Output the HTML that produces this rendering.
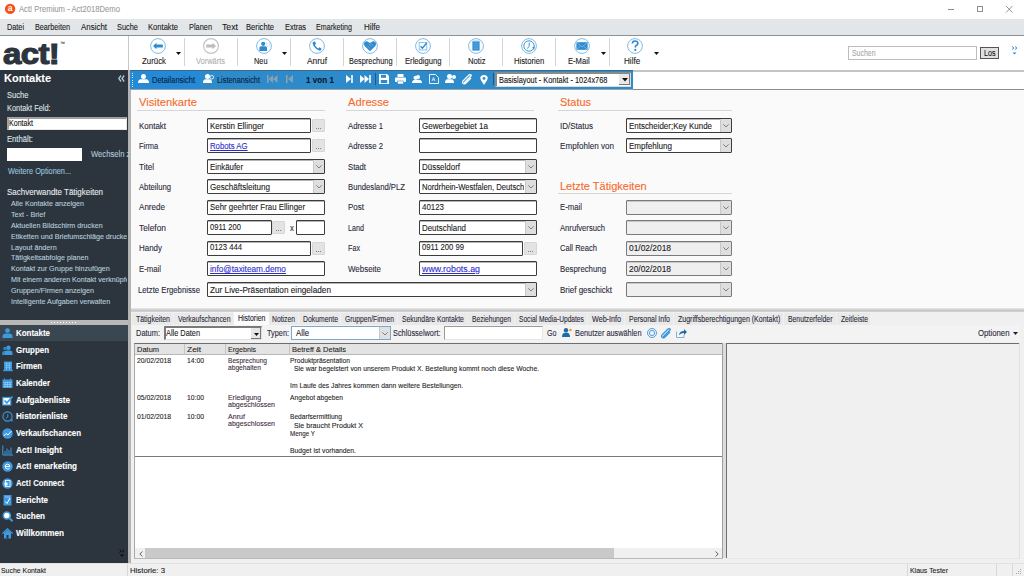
<!DOCTYPE html>
<html><head><meta charset="utf-8">
<style>
*{margin:0;padding:0;box-sizing:border-box}
html,body{width:1024px;height:576px;overflow:hidden;background:#fff;font-family:"Liberation Sans",sans-serif;color:#222}
.a{position:absolute}
.t{position:absolute;white-space:nowrap;line-height:1;-webkit-text-stroke:0.1px currentColor}
svg{position:absolute;overflow:visible}
.lk{color:#2b2bd0;text-decoration:underline}
</style></head><body>
<div class="a" style="left:0px;top:0px;width:1024px;height:19px;background:#fff"></div>
<svg style="left:4px;top:3px" width="12" height="12" viewBox="0 0 12 12"><circle cx="6.1" cy="5.9" r="5.2" fill="#f2541b"/><text x="6.1" y="8.4" font-family="Liberation Sans" font-weight="bold" font-size="8.5" fill="#fff" text-anchor="middle">a</text></svg>
<div class="t" style="left:19px;top:5px;font-size:8.5px;color:#9c9c9c;font-weight:normal;transform:scaleX(0.902);transform-origin:0 0;">Act! Premium - Act2018Demo</div>
<div class="a" style="left:948px;top:9px;width:6px;height:1px;background:#8a8a8a"></div>
<div class="a" style="left:976.5px;top:5.5px;width:6.5px;height:6.5px;border:1px solid #8e8e8e"></div>
<svg style="left:1006px;top:5.8px" width="7" height="7" viewBox="0 0 7 7"><path d="M0 0L6.5 6.5M6.5 0L0 6.5" stroke="#8a8a8a" stroke-width="0.9"/></svg>
<div class="a" style="left:0px;top:19px;width:1024px;height:17px;background:#e3e6e8;border-bottom:1px solid #8e9092"></div>
<div class="t" style="left:7px;top:23px;font-size:8.5px;color:#1a1a1a;font-weight:normal;transform:scaleX(0.857);transform-origin:0 0;">Datei</div>
<div class="t" style="left:35px;top:23px;font-size:8.5px;color:#1a1a1a;font-weight:normal;transform:scaleX(0.851);transform-origin:0 0;">Bearbeiten</div>
<div class="t" style="left:81px;top:23px;font-size:8.5px;color:#1a1a1a;font-weight:normal;transform:scaleX(0.933);transform-origin:0 0;">Ansicht</div>
<div class="t" style="left:117px;top:23px;font-size:8.5px;color:#1a1a1a;font-weight:normal;transform:scaleX(0.871);transform-origin:0 0;">Suche</div>
<div class="t" style="left:148px;top:23px;font-size:8.5px;color:#1a1a1a;font-weight:normal;transform:scaleX(0.894);transform-origin:0 0;">Kontakte</div>
<div class="t" style="left:189px;top:23px;font-size:8.5px;color:#1a1a1a;font-weight:normal;transform:scaleX(0.869);transform-origin:0 0;">Planen</div>
<div class="t" style="left:222px;top:23px;font-size:8.5px;color:#1a1a1a;font-weight:normal;transform:scaleX(1.026);transform-origin:0 0;">Text</div>
<div class="t" style="left:246px;top:23px;font-size:8.5px;color:#1a1a1a;font-weight:normal;transform:scaleX(0.898);transform-origin:0 0;">Berichte</div>
<div class="t" style="left:285px;top:23px;font-size:8.5px;color:#1a1a1a;font-weight:normal;transform:scaleX(0.872);transform-origin:0 0;">Extras</div>
<div class="t" style="left:316px;top:23px;font-size:8.5px;color:#1a1a1a;font-weight:normal;transform:scaleX(0.837);transform-origin:0 0;">Emarketing</div>
<div class="t" style="left:364px;top:23px;font-size:8.5px;color:#1a1a1a;font-weight:normal;transform:scaleX(0.941);transform-origin:0 0;">Hilfe</div>
<div class="a" style="left:0px;top:36px;width:1024px;height:34px;background:#fff"></div>
<div class="t" style="left:3px;top:39px;font-size:30px;font-weight:bold;color:#2c353e;-webkit-text-stroke:1.2px #2c353e;transform:scaleX(1.1);transform-origin:0 0;letter-spacing:-0.6px">act!</div>
<div class="t" style="left:60px;top:41px;font-size:5px;color:#2c353e;font-weight:normal;">™</div>
<div class="a" style="left:128px;top:36px;width:1px;height:34px;background:#c8c8c8"></div>
<div class="a" style="left:184px;top:38px;width:1px;height:28px;background:#d4d4d4"></div>
<div class="a" style="left:237px;top:38px;width:1px;height:28px;background:#d4d4d4"></div>
<div class="a" style="left:290px;top:38px;width:1px;height:28px;background:#d4d4d4"></div>
<div class="a" style="left:343px;top:38px;width:1px;height:28px;background:#d4d4d4"></div>
<div class="a" style="left:396px;top:38px;width:1px;height:28px;background:#d4d4d4"></div>
<div class="a" style="left:449px;top:38px;width:1px;height:28px;background:#d4d4d4"></div>
<div class="a" style="left:502px;top:38px;width:1px;height:28px;background:#d4d4d4"></div>
<div class="a" style="left:555px;top:38px;width:1px;height:28px;background:#d4d4d4"></div>
<div class="a" style="left:609px;top:38px;width:1px;height:28px;background:#d4d4d4"></div>
<svg style="left:157.5px;top:46px" width="1" height="1"><circle cx="0" cy="0" r="7.4" fill="none" stroke="#7fbce8" stroke-width="1"/><path d="M-5 0L-1.5-3.2V-1.5H4.8V1.5H-1.5V3.2Z" fill="#2e8bd0"/></svg>
<div class="t" style="left:142px;top:57px;font-size:8.5px;color:#1a1a1a;font-weight:normal;transform:scaleX(0.924);transform-origin:0 0;">Zurück</div>
<svg style="left:176px;top:51.5px" width="5" height="3" viewBox="0 0 5 3"><path d="M0 0H5L2.5 3Z" fill="#111"/></svg>
<svg style="left:210.5px;top:46px" width="1" height="1"><circle cx="0" cy="0" r="7.4" fill="none" stroke="#c4c4c4" stroke-width="1.2"/><path d="M5 0L1.5-3.2V-1.5H-4.8V1.5H1.5V3.2Z" fill="#bdbdbd"/></svg>
<div class="t" style="left:196px;top:57px;font-size:8.5px;color:#b0b0b0;font-weight:normal;transform:scaleX(0.877);transform-origin:0 0;">Vorwärts</div>
<svg style="left:263.75px;top:46px" width="1" height="1"><circle cx="0" cy="0" r="7.4" fill="none" stroke="#7fbce8" stroke-width="1"/><circle cx="-0.8" cy="-2.2" r="2.1" fill="#2e8bd0"/><path d="M-4.6 5V1.8Q-4.6 0.2-3 0.2H1.4Q3 0.2 3 1.8V5Z" fill="#2e8bd0"/><rect x="2.8" y="-3" width="2.6" height="3.2" fill="none" stroke="#c4e0f4" stroke-width="0.7"/></svg>
<div class="t" style="left:253.5px;top:57px;font-size:8.5px;color:#1a1a1a;font-weight:normal;transform:scaleX(0.866);transform-origin:0 0;">Neu</div>
<svg style="left:282px;top:51.5px" width="5" height="3" viewBox="0 0 5 3"><path d="M0 0H5L2.5 3Z" fill="#111"/></svg>
<svg style="left:316.75px;top:46px" width="1" height="1"><circle cx="0" cy="0" r="7.4" fill="none" stroke="#7fbce8" stroke-width="1"/><path d="M-3.6-4.2L-2-4.4L-1-2.2L-2.1-1.1Q-0.6 1.6 1.3 2.5L2.4 1.3L4.4 2.4L4.2 4Q3.5 4.8 2.2 4.4Q-3.2 2-4.4-2.6Q-4.6-3.6-3.6-4.2Z" fill="#2e8bd0"/></svg>
<div class="t" style="left:307px;top:57px;font-size:8.5px;color:#1a1a1a;font-weight:normal;transform:scaleX(0.984);transform-origin:0 0;">Anruf</div>
<svg style="left:370px;top:46px" width="1" height="1"><circle cx="0" cy="0" r="7.4" fill="none" stroke="#7fbce8" stroke-width="1"/><path d="M0 5.2L-5.4 0Q-6.9-2.2-5.4-3.9Q-3.6-5.4-1.6-4.1L0-3L1.6-4.1Q3.6-5.4 5.4-3.9Q6.9-2.2 5.4 0Z" fill="#2e8bd0"/><path d="M-1.4-2.2L1.6 0.6M-2.6 0L0.4 2.6M0.6-2.8L3.4-0.4" stroke="#9ccbee" stroke-width="0.5"/></svg>
<div class="t" style="left:349px;top:57px;font-size:8.5px;color:#1a1a1a;font-weight:normal;transform:scaleX(0.868);transform-origin:0 0;">Besprechung</div>
<svg style="left:422.8px;top:46px" width="1" height="1"><circle cx="0" cy="0" r="7.4" fill="none" stroke="#7fbce8" stroke-width="1"/><rect x="-3.8" y="-3.6" width="7.6" height="7.6" fill="none" stroke="#7fbce8" stroke-width="0.9"/><path d="M-2.4 0.2L-0.6 2.2L3.6-3" fill="none" stroke="#2e8bd0" stroke-width="1.4"/></svg>
<div class="t" style="left:405px;top:57px;font-size:8.5px;color:#1a1a1a;font-weight:normal;transform:scaleX(0.898);transform-origin:0 0;">Erledigung</div>
<svg style="left:476px;top:46px" width="1" height="1"><circle cx="0" cy="0" r="7.4" fill="none" stroke="#7fbce8" stroke-width="1"/><rect x="-3.6" y="-4.6" width="7.2" height="9.2" fill="#2e8bd0"/><path d="M-2.6-2.6H2.6M-2.6-0.8H2.6M-2.6 1H2.6M-2.6 2.8H2.6" stroke="#8cc3ea" stroke-width="0.5"/><rect x="-3.6" y="-5.4" width="7.2" height="1.2" fill="#7fbce8"/></svg>
<div class="t" style="left:467.5px;top:57px;font-size:8.5px;color:#1a1a1a;font-weight:normal;transform:scaleX(0.904);transform-origin:0 0;">Notiz</div>
<svg style="left:529px;top:46px" width="1" height="1"><circle cx="0" cy="0" r="7.4" fill="none" stroke="#7fbce8" stroke-width="1"/><circle cx="0" cy="0" r="5.2" fill="none" stroke="#2e8bd0" stroke-width="0.9"/><path d="M0.2-3.5V0.6L-2 2.6" fill="none" stroke="#2e8bd0" stroke-width="0.9"/><path d="M3.2 1.4L5.6 0.6L5.2 4Z" fill="#2e8bd0"/></svg>
<div class="t" style="left:513.75px;top:57px;font-size:8.5px;color:#1a1a1a;font-weight:normal;transform:scaleX(0.902);transform-origin:0 0;">Historien</div>
<svg style="left:582px;top:46px" width="1" height="1"><circle cx="0" cy="0" r="7.4" fill="none" stroke="#7fbce8" stroke-width="1"/><rect x="-5.6" y="-3.8" width="11.2" height="7.6" fill="#2e8bd0"/><path d="M-5.6-3.8L0 1L5.6-3.8M-5.6 3.8L-1.5 0M5.6 3.8L1.5 0" fill="none" stroke="#9fd0f2" stroke-width="0.6"/></svg>
<div class="t" style="left:568.4px;top:57px;font-size:8.5px;color:#1a1a1a;font-weight:normal;transform:scaleX(0.897);transform-origin:0 0;">E-Mail</div>
<svg style="left:601px;top:51.5px" width="5" height="3" viewBox="0 0 5 3"><path d="M0 0H5L2.5 3Z" fill="#111"/></svg>
<svg style="left:635px;top:46px" width="1" height="1"><circle cx="0" cy="0" r="7.4" fill="none" stroke="#7fbce8" stroke-width="1"/><path d="M-2.6-2.4Q-2.6-5 0-5Q2.8-5 2.8-2.6Q2.8-1.2 1.2-0.4Q0.3 0.1 0.3 1.4" fill="none" stroke="#2e8bd0" stroke-width="1.7"/><circle cx="0.3" cy="3.9" r="1.1" fill="#2e8bd0"/></svg>
<div class="t" style="left:623.75px;top:57px;font-size:8.5px;color:#1a1a1a;font-weight:normal;transform:scaleX(0.956);transform-origin:0 0;">Hilfe</div>
<svg style="left:654px;top:51.5px" width="5" height="3" viewBox="0 0 5 3"><path d="M0 0H5L2.5 3Z" fill="#111"/></svg>
<div class="a" style="left:848px;top:46px;width:129px;height:14px;background:#fff;border:1px solid #bdbdbd"></div>
<div class="t" style="left:852px;top:49px;font-size:8.5px;color:#a8a8a8;font-weight:normal;transform:scaleX(0.815);transform-origin:0 0;">Suchen</div>
<div class="a" style="left:980px;top:47px;width:19px;height:12px;background:#e1e1e1;border:1px solid #555"></div>
<div class="t" style="left:983.5px;top:49px;font-size:8.5px;color:#111;font-weight:normal;transform:scaleX(0.839);transform-origin:0 0;">Los</div>
<svg style="left:1011px;top:46px" width="8" height="10" viewBox="0 0 8 10"><path d="M1 0.5L3 2L1 3.5M4 0.5L6 2L4 3.5" fill="none" stroke="#2e8bd0" stroke-width="0.9"/><path d="M1.5 6.5H5.5L3.5 8.5Z" fill="#2e8bd0"/></svg>
<div class="a" style="left:0px;top:70px;width:128px;height:493px;background:#2c353e"></div>
<div class="a" style="left:128px;top:70px;width:3px;height:493px;background:#b4b4b4"></div>
<div class="t" style="left:4px;top:73px;font-size:11px;color:#ffffff;font-weight:bold;">Kontakte</div>
<svg style="left:118px;top:75px" width="7" height="7" viewBox="0 0 7 7"><path d="M3 0.5L0.8 3.5L3 6.5M6.2 0.5L4 3.5L6.2 6.5" fill="none" stroke="#a9c8dc" stroke-width="1.3"/></svg>
<div class="t" style="left:7px;top:91px;font-size:8.5px;color:#dfe3e6;font-weight:normal;transform:scaleX(0.892);transform-origin:0 0;">Suche</div>
<div class="t" style="left:7px;top:104px;font-size:8.5px;color:#dfe3e6;font-weight:normal;transform:scaleX(0.871);transform-origin:0 0;">Kontakt Feld:</div>
<div class="a" style="left:7px;top:117px;width:120px;height:13px;background:#fff;border-top:2px solid #a0a0a0;border-left:2px solid #a0a0a0;border-right:1px solid #e8e8e8;border-bottom:1px solid #e8e8e8"></div>
<div class="t" style="left:9px;top:119px;font-size:8.5px;color:#111;font-weight:normal;transform:scaleX(0.833);transform-origin:0 0;">Kontakt</div>
<div class="t" style="left:7px;top:135px;font-size:8.5px;color:#dfe3e6;font-weight:normal;transform:scaleX(0.900);transform-origin:0 0;">Enthält:</div>
<div class="a" style="left:7px;top:148px;width:75px;height:13px;background:#fff"></div>
<div class="t" style="left:91px;top:150px;font-size:8.5px;color:#b4cad8;font-weight:normal;transform:scaleX(0.900);transform-origin:0 0;">Wechseln z</div>
<div class="t" style="left:7.5px;top:167px;font-size:8.5px;color:#9cc2de;font-weight:normal;transform:scaleX(0.862);transform-origin:0 0;">Weitere Optionen...</div>
<div class="t" style="left:7px;top:188px;font-size:9px;color:#e8ebed;font-weight:normal;transform:scaleX(0.886);transform-origin:0 0;">Sachverwandte Tätigkeiten</div>
<div class="a" style="left:0;top:190px;width:127px;height:125px;overflow:hidden">
<div class="t" style="left:11px;top:10px;font-size:7.6px;color:#b9cfdd;transform:scaleX(0.94);transform-origin:0 0">Alle Kontakte anzeigen</div>
<div class="t" style="left:11px;top:21px;font-size:7.6px;color:#b9cfdd;transform:scaleX(0.94);transform-origin:0 0">Text - Brief</div>
<div class="t" style="left:11px;top:32px;font-size:7.6px;color:#b9cfdd;transform:scaleX(0.94);transform-origin:0 0">Aktuellen Bildschirm drucken</div>
<div class="t" style="left:11px;top:43px;font-size:7.6px;color:#b9cfdd;transform:scaleX(0.94);transform-origin:0 0">Etiketten und Briefumschläge drucken</div>
<div class="t" style="left:11px;top:54px;font-size:7.6px;color:#b9cfdd;transform:scaleX(0.94);transform-origin:0 0">Layout ändern</div>
<div class="t" style="left:11px;top:64px;font-size:7.6px;color:#b9cfdd;transform:scaleX(0.94);transform-origin:0 0">Tätigkeitsabfolge planen</div>
<div class="t" style="left:11px;top:75px;font-size:7.6px;color:#b9cfdd;transform:scaleX(0.94);transform-origin:0 0">Kontakt zur Gruppe hinzufügen</div>
<div class="t" style="left:11px;top:86px;font-size:7.6px;color:#b9cfdd;transform:scaleX(0.94);transform-origin:0 0">Mit einem anderen Kontakt verknüpfen</div>
<div class="t" style="left:11px;top:97px;font-size:7.6px;color:#b9cfdd;transform:scaleX(0.94);transform-origin:0 0">Gruppen/Firmen anzeigen</div>
<div class="t" style="left:11px;top:108px;font-size:7.6px;color:#b9cfdd;transform:scaleX(0.94);transform-origin:0 0">Intelligente Aufgaben verwalten</div>
</div>
<div class="a" style="left:0px;top:320px;width:128px;height:5px;background:#b8b8b8"></div>
<div class="a" style="left:51px;top:322px;width:1px;height:1px;background:#fff"></div>
<div class="a" style="left:54px;top:322px;width:1px;height:1px;background:#fff"></div>
<div class="a" style="left:57px;top:322px;width:1px;height:1px;background:#fff"></div>
<div class="a" style="left:60px;top:322px;width:1px;height:1px;background:#fff"></div>
<div class="a" style="left:63px;top:322px;width:1px;height:1px;background:#fff"></div>
<div class="a" style="left:66px;top:322px;width:1px;height:1px;background:#fff"></div>
<div class="a" style="left:69px;top:322px;width:1px;height:1px;background:#fff"></div>
<div class="a" style="left:72px;top:322px;width:1px;height:1px;background:#fff"></div>
<div class="a" style="left:75px;top:322px;width:1px;height:1px;background:#fff"></div>
<div class="a" style="left:0px;top:325px;width:128px;height:16px;background:#3a4650"></div>
<div class="t" style="left:16px;top:329px;font-size:8.5px;color:#ffffff;font-weight:bold;transform:scaleX(0.935);transform-origin:0 0;">Kontakte</div>
<svg style="left:2px;top:328px" width="11" height="11" viewBox="0 0 11 11"><circle cx="5.5" cy="2.6" r="2.4" fill="#3d9ae0"/><path d="M0.5 10V8.6Q0.5 5.6 3.5 5.4H7.5Q10.5 5.6 10.5 8.6V10Z" fill="#3d9ae0"/></svg>
<div class="t" style="left:16px;top:346px;font-size:8.5px;color:#ffffff;font-weight:bold;transform:scaleX(0.932);transform-origin:0 0;">Gruppen</div>
<svg style="left:2px;top:345px" width="11" height="11" viewBox="0 0 11 11"><circle cx="3" cy="3.5" r="1.8" fill="#2a86b8"/><path d="M0 10V8Q0 6 2 6H4V10Z" fill="#2a86b8"/><circle cx="6.5" cy="2.8" r="2.2" fill="#3d9ae0"/><path d="M2.5 10V8.6Q2.5 5.8 5 5.6H8Q10.5 5.8 10.5 8.6V10Z" fill="#3d9ae0"/></svg>
<div class="t" style="left:16px;top:362px;font-size:8.5px;color:#ffffff;font-weight:bold;transform:scaleX(0.917);transform-origin:0 0;">Firmen</div>
<svg style="left:2px;top:361px" width="11" height="11" viewBox="0 0 11 11"><rect x="2" y="0.5" width="8" height="9.5" fill="#3d9ae0"/><path d="M3.5 2.5H8.5M3.5 4.5H8.5M3.5 6.5H8.5M4.5 1.5V8.5M7.5 1.5V8.5" stroke="#8cc6ee" stroke-width="0.6"/><rect x="1" y="9.2" width="10" height="1" fill="#3d9ae0"/></svg>
<div class="t" style="left:16px;top:379px;font-size:8.5px;color:#ffffff;font-weight:bold;transform:scaleX(0.935);transform-origin:0 0;">Kalender</div>
<svg style="left:2px;top:378px" width="11" height="11" viewBox="0 0 11 11"><rect x="0.5" y="1.5" width="10" height="8.5" fill="#3d9ae0"/><path d="M1.5 4.5H9.5M1.5 6.5H9.5M1.5 8.5H9.5M3 3.8V9.5M5.5 3.8V9.5M8 3.8V9.5" stroke="#a8d4f2" stroke-width="0.6"/><path d="M2.5 0.5V2.5M8.5 0.5V2.5" stroke="#3d9ae0" stroke-width="1"/></svg>
<div class="t" style="left:16px;top:396px;font-size:8.5px;color:#ffffff;font-weight:bold;transform:scaleX(0.961);transform-origin:0 0;">Aufgabenliste</div>
<svg style="left:2px;top:395px" width="11" height="11" viewBox="0 0 11 11"><rect x="0.8" y="2.5" width="8" height="7.5" fill="#fff" stroke="#3d9ae0" stroke-width="1.2"/><path d="M2.5 5.5L4.8 8L10.5 1.5" fill="none" stroke="#3d9ae0" stroke-width="1.8"/></svg>
<div class="t" style="left:16px;top:412px;font-size:8.5px;color:#ffffff;font-weight:bold;transform:scaleX(0.956);transform-origin:0 0;">Historienliste</div>
<svg style="left:2px;top:411px" width="11" height="11" viewBox="0 0 11 11"><circle cx="5.5" cy="5.5" r="4.6" fill="none" stroke="#3d9ae0" stroke-width="1.1"/><path d="M5.8 3V6L3.8 7.5" fill="none" stroke="#3d9ae0" stroke-width="0.9"/><path d="M8.5 8.5L11 8.5L10 11Z" fill="#3d9ae0"/></svg>
<div class="t" style="left:16px;top:429px;font-size:8.5px;color:#ffffff;font-weight:bold;transform:scaleX(0.930);transform-origin:0 0;">Verkaufschancen</div>
<svg style="left:2px;top:428px" width="11" height="11" viewBox="0 0 11 11"><circle cx="5.5" cy="5.5" r="5.2" fill="#3d9ae0"/><path d="M1.8 8L4 5.5L6 7L9.5 3" fill="none" stroke="#fff" stroke-width="1"/></svg>
<div class="t" style="left:16px;top:446px;font-size:8.5px;color:#ffffff;font-weight:bold;transform:scaleX(0.984);transform-origin:0 0;">Act! Insight</div>
<svg style="left:2px;top:445px" width="11" height="11" viewBox="0 0 11 11"><path d="M0.8 0.5V10H11" fill="none" stroke="#3d9ae0" stroke-width="1"/><path d="M3 9.5V6M5 9.5V3.5M7 9.5V5M9 9.5V2.5" stroke="#3d9ae0" stroke-width="1"/></svg>
<div class="t" style="left:16px;top:462px;font-size:8.5px;color:#ffffff;font-weight:bold;transform:scaleX(0.950);transform-origin:0 0;">Act! emarketing</div>
<svg style="left:2px;top:461px" width="11" height="11" viewBox="0 0 11 11"><circle cx="5.5" cy="5.5" r="5.2" fill="#3d9ae0"/><path d="M3.2 5.6H7.8Q7.8 3.2 5.5 3.2Q3.2 3.2 3.2 5.6Q3.2 8 5.6 8Q7 8 7.6 7.2" fill="none" stroke="#fff" stroke-width="1"/></svg>
<div class="t" style="left:16px;top:479px;font-size:8.5px;color:#ffffff;font-weight:bold;transform:scaleX(0.908);transform-origin:0 0;">Act! Connect</div>
<svg style="left:2px;top:478px" width="11" height="11" viewBox="0 0 11 11"><circle cx="5.5" cy="5.5" r="5.2" fill="#3d9ae0"/><rect x="3.5" y="2.5" width="4.5" height="6" fill="none" stroke="#fff" stroke-width="0.8"/><path d="M2.5 4.5H5.5V7.5H2.5Z" fill="#fff"/></svg>
<div class="t" style="left:16px;top:496px;font-size:8.5px;color:#ffffff;font-weight:bold;transform:scaleX(0.941);transform-origin:0 0;">Berichte</div>
<svg style="left:2px;top:495px" width="11" height="11" viewBox="0 0 11 11"><rect x="1.5" y="0" width="8" height="10.5" fill="#3d9ae0"/><path d="M3 6.5L5 8.5L8 3" fill="none" stroke="#fff" stroke-width="1"/><path d="M3 2H8" stroke="#bfe0f6" stroke-width="0.7"/></svg>
<div class="t" style="left:16px;top:512px;font-size:8.5px;color:#ffffff;font-weight:bold;transform:scaleX(0.945);transform-origin:0 0;">Suchen</div>
<svg style="left:2px;top:511px" width="11" height="11" viewBox="0 0 11 11"><circle cx="4.8" cy="4.5" r="3.5" fill="#fff" stroke="#3d9ae0" stroke-width="1.6"/><path d="M7.3 7L10.5 10.3" stroke="#3d9ae0" stroke-width="2"/></svg>
<div class="t" style="left:16px;top:529px;font-size:8.5px;color:#ffffff;font-weight:bold;transform:scaleX(0.960);transform-origin:0 0;">Willkommen</div>
<svg style="left:2px;top:528px" width="11" height="11" viewBox="0 0 11 11"><path d="M0.5 5.5L5.5 0.8L10.5 5.5" fill="none" stroke="#3d9ae0" stroke-width="1.3"/><path d="M2 5V10.5H9V5L5.5 2Z" fill="#3d9ae0"/><rect x="4.5" y="7" width="2" height="3.5" fill="#2c353e"/></svg>
<svg style="left:119px;top:549px" width="6" height="8" viewBox="0 0 6 8"><path d="M0.5 0.5L2.2 2L0.5 3.5M3 0.5L4.7 2L3 3.5" fill="none" stroke="#0a0a0a" stroke-width="0.9"/><path d="M0.8 5.5H5.2L3 7.8Z" fill="#0a0a0a"/></svg>
<div class="a" style="left:130px;top:70px;width:503px;height:20px;background:#2d8bcb;border-top:1px solid #3a6a90;border-bottom:1px solid #9aa4ac"></div>
<div class="a" style="left:131px;top:71px;width:69px;height:18px;background:#2489d6"></div>
<div class="a" style="left:132px;top:73.0px;width:1px;height:1px;background:#e8f2fa"></div>
<div class="a" style="left:132px;top:75.2px;width:1px;height:1px;background:#e8f2fa"></div>
<div class="a" style="left:132px;top:77.4px;width:1px;height:1px;background:#e8f2fa"></div>
<div class="a" style="left:132px;top:79.6px;width:1px;height:1px;background:#e8f2fa"></div>
<div class="a" style="left:132px;top:81.8px;width:1px;height:1px;background:#e8f2fa"></div>
<div class="a" style="left:132px;top:84.0px;width:1px;height:1px;background:#e8f2fa"></div>
<div class="a" style="left:132px;top:86.2px;width:1px;height:1px;background:#e8f2fa"></div>
<svg style="left:138px;top:74px" width="11" height="9" viewBox="0 0 11 9"><circle cx="5.5" cy="2.6" r="2.5" fill="#fff"/><path d="M0 9Q0 5.6 3 5.3H8Q11 5.6 11 9Z" fill="#fff"/></svg>
<div class="t" style="left:152px;top:76px;font-size:8.5px;color:#0d2236;font-weight:normal;transform:scaleX(0.884);transform-origin:0 0;">Detailansicht</div>
<svg style="left:203px;top:74px" width="11" height="9" viewBox="0 0 11 9"><circle cx="4.5" cy="2.6" r="2.5" fill="#fff"/><path d="M0 9Q0 5.6 2.5 5.3H6.5Q9 5.6 9 9Z" fill="#fff"/><circle cx="8.8" cy="3.2" r="1.8" fill="none" stroke="#fff" stroke-width="0.8"/></svg>
<div class="t" style="left:217px;top:76px;font-size:8.5px;color:#0d2236;font-weight:normal;transform:scaleX(0.867);transform-origin:0 0;">Listenansicht</div>
<svg style="left:267px;top:75px" width="11" height="8" viewBox="0 0 11 8"><rect x="0" y="0" width="1.6" height="8" fill="#8aa0b0"/><path d="M6 0L1.6 4L6 8ZM10.5 0L6 4L10.5 8Z" fill="#8aa0b0"/></svg>
<svg style="left:286px;top:75px" width="7" height="8" viewBox="0 0 7 8"><rect x="0" y="0" width="1.6" height="8" fill="#8aa0b0"/><path d="M7 0L2 4L7 8Z" fill="#8aa0b0"/></svg>
<div class="t" style="left:305.5px;top:76px;font-size:8.5px;color:#0d1a26;font-weight:bold;transform:scaleX(0.956);transform-origin:0 0;">1 von 1</div>
<svg style="left:345.5px;top:75px" width="7" height="8" viewBox="0 0 7 8"><path d="M0 0L5 4L0 8Z" fill="#fff"/><rect x="5.2" y="0" width="1.6" height="8" fill="#fff"/></svg>
<svg style="left:360px;top:75px" width="11" height="8" viewBox="0 0 11 8"><path d="M0 0L4.5 4L0 8ZM4.5 0L9 4L4.5 8Z" fill="#fff"/><rect x="9.2" y="0" width="1.6" height="8" fill="#fff"/></svg>
<div class="a" style="left:375px;top:73px;width:1px;height:12px;background:#1b5a88"></div>
<svg style="left:379px;top:74px" width="10" height="10" viewBox="0 0 10 10"><path d="M0 0H8L10 2V10H0Z" fill="#fff"/><rect x="2" y="0.8" width="5" height="3" fill="#2d8bcb"/><rect x="1.8" y="6" width="6.4" height="3.2" fill="#2d8bcb"/></svg>
<svg style="left:395px;top:74px" width="11" height="10" viewBox="0 0 11 10"><rect x="2.5" y="0" width="6" height="3" fill="#fff"/><rect x="0" y="3.5" width="11" height="4.5" rx="1" fill="#fff"/><rect x="2.5" y="7" width="6" height="3" fill="#fff" stroke="#2d8bcb" stroke-width="0.6"/></svg>
<svg style="left:412px;top:75px" width="10" height="8" viewBox="0 0 10 8"><circle cx="6" cy="2" r="2" fill="#fff"/><circle cx="3.5" cy="2.8" r="2" fill="#fff"/><path d="M0 8Q0 5 3 4.8H7Q10 5 10 8Z" fill="#fff"/></svg>
<svg style="left:429px;top:74px" width="10" height="10" viewBox="0 0 10 10"><path d="M0.5 0.5H6.5L9.5 3.5V9.5H0.5Z" fill="none" stroke="#fff" stroke-width="0.9"/><path d="M3 7L4.5 3.5L6 7M3.6 5.8H5.4" fill="none" stroke="#fff" stroke-width="0.7"/></svg>
<svg style="left:445px;top:74px" width="11" height="9" viewBox="0 0 11 9"><circle cx="4.5" cy="2.6" r="2.5" fill="#fff"/><path d="M0 9Q0 5.6 2.5 5.3H6.5Q9 5.6 9 9Z" fill="#fff"/><circle cx="9" cy="3" r="2" fill="#fff"/></svg>
<svg style="left:462px;top:74px" width="11" height="11" viewBox="0 0 11 11"><path d="M2 9L8.5 2.5Q10 1 8.8 0.8Q7.5 0.3 6.5 1.5L1 7Q-0.2 8.8 1.5 9.6Q3 10.2 4 9L9 4" fill="none" stroke="#fff" stroke-width="1.2"/></svg>
<svg style="left:480px;top:75px" width="8" height="10" viewBox="0 0 8 10"><path d="M4 10L0.8 5Q-0.5 2.5 1 1Q2.2 0 4 0Q5.8 0 7 1Q8.5 2.5 7.2 5Z" fill="#fff"/><circle cx="4" cy="3.4" r="1.4" fill="#2d8bcb"/></svg>
<div class="a" style="left:493px;top:73px;width:1px;height:12px;background:#1b5a88"></div>
<div class="a" style="left:495px;top:72px;width:136px;height:15px;background:#fff;border-top:2px solid #8a8a8a;border-left:2px solid #8a8a8a;border-right:1px solid #dcdcdc;border-bottom:1px solid #dcdcdc"></div>
<div class="t" style="left:499px;top:76px;font-size:8.5px;color:#111;font-weight:normal;transform:scaleX(0.869);transform-origin:0 0;">Basislayout - Kontakt - 1024x768</div>
<div class="a" style="left:619px;top:73.5px;width:11px;height:11.5px;background:#e8e8e8;border-right:1px solid #7a7a7a;border-bottom:1px solid #7a7a7a"></div>
<svg style="left:621.5px;top:78px" width="6" height="4" viewBox="0 0 6 4"><path d="M0 0H6L3 3.5Z" fill="#111"/></svg>
<div class="a" style="left:633px;top:70px;width:391px;height:2px;background:#c4c4c4"></div>
<div class="a" style="left:633px;top:89px;width:391px;height:1px;background:#8c8c8c"></div>
<div class="a" style="left:131px;top:90px;width:893px;height:219px;background:#fafafa"></div>
<div class="t" style="left:139px;top:97px;font-size:11px;color:#f7692c;font-weight:normal;transform:scaleX(1.013);transform-origin:0 0;">Visitenkarte</div>
<div class="a" style="left:137px;top:110px;width:188px;height:1px;background:#d6d6d6"></div>
<div class="t" style="left:348px;top:97px;font-size:11px;color:#f7692c;font-weight:normal;transform:scaleX(1.016);transform-origin:0 0;">Adresse</div>
<div class="a" style="left:346px;top:110px;width:188px;height:1px;background:#d6d6d6"></div>
<div class="t" style="left:560px;top:97px;font-size:11px;color:#f7692c;font-weight:normal;transform:scaleX(0.994);transform-origin:0 0;">Status</div>
<div class="a" style="left:558px;top:110px;width:174px;height:1px;background:#d6d6d6"></div>
<div class="t" style="left:560px;top:181px;font-size:11px;color:#f7692c;font-weight:normal;">Letzte Tätigkeiten</div>
<div class="a" style="left:558px;top:193px;width:174px;height:1px;background:#d6d6d6"></div>
<div class="t" style="left:139px;top:122px;font-size:8.5px;color:#2a2a3a;font-weight:normal;transform:scaleX(0.937);transform-origin:0 0;">Kontakt</div>
<div class="t" style="left:139px;top:142px;font-size:8.5px;color:#2a2a3a;font-weight:normal;transform:scaleX(0.884);transform-origin:0 0;">Firma</div>
<div class="t" style="left:139px;top:163px;font-size:8.5px;color:#2a2a3a;font-weight:normal;transform:scaleX(0.953);transform-origin:0 0;">Titel</div>
<div class="t" style="left:139px;top:183px;font-size:8.5px;color:#2a2a3a;font-weight:normal;transform:scaleX(0.903);transform-origin:0 0;">Abteilung</div>
<div class="t" style="left:139px;top:203px;font-size:8.5px;color:#2a2a3a;font-weight:normal;transform:scaleX(0.949);transform-origin:0 0;">Anrede</div>
<div class="t" style="left:139px;top:224px;font-size:8.5px;color:#2a2a3a;font-weight:normal;transform:scaleX(0.985);transform-origin:0 0;">Telefon</div>
<div class="t" style="left:139px;top:244px;font-size:8.5px;color:#2a2a3a;font-weight:normal;transform:scaleX(0.936);transform-origin:0 0;">Handy</div>
<div class="t" style="left:139px;top:265px;font-size:8.5px;color:#2a2a3a;font-weight:normal;transform:scaleX(0.913);transform-origin:0 0;">E-mail</div>
<div class="t" style="left:138px;top:286px;font-size:8.5px;color:#2a2a3a;font-weight:normal;transform:scaleX(0.911);transform-origin:0 0;">Letzte Ergebnisse</div>
<div class="a" style="left:207px;top:118px;width:104px;height:15px;background:#fff;border:1px solid #3c3c3c;box-shadow:inset 0 1px 0 #b4b4b4;border-radius:1px"></div>
<div class="t" style="left:210px;top:122px;font-size:8.5px;color:#1a1a1a;font-weight:normal;transform:scaleX(0.945);transform-origin:0 0;">Kerstin Ellinger</div>
<div class="a" style="left:312px;top:118.5px;width:13px;height:13.5px;background:#e3e3e3;border:1px solid #d6d6d6;border-radius:1px"></div>
<div class="a" style="left:316px;top:128px;width:1px;height:1px;background:#8a7a9a"></div>
<div class="a" style="left:318px;top:128px;width:1px;height:1px;background:#8a7a9a"></div>
<div class="a" style="left:320px;top:128px;width:1px;height:1px;background:#8a7a9a"></div>
<div class="a" style="left:207px;top:138px;width:104px;height:15px;background:#fff;border:1px solid #3c3c3c;box-shadow:inset 0 1px 0 #b4b4b4;border-radius:1px"></div>
<div class="t" style="left:210px;top:142px;font-size:8.5px;color:#2b2bd0;font-weight:normal;transform:scaleX(0.915);transform-origin:0 0;"><span class="lk">Robots AG</span></div>
<div class="a" style="left:312px;top:138.5px;width:13px;height:13.5px;background:#e3e3e3;border:1px solid #d6d6d6;border-radius:1px"></div>
<div class="a" style="left:316px;top:148px;width:1px;height:1px;background:#8a7a9a"></div>
<div class="a" style="left:318px;top:148px;width:1px;height:1px;background:#8a7a9a"></div>
<div class="a" style="left:320px;top:148px;width:1px;height:1px;background:#8a7a9a"></div>
<div class="a" style="left:207px;top:159px;width:118px;height:15px;background:#fff;border:1px solid #3c3c3c;box-shadow:inset 0 1px 0 #b4b4b4;border-radius:1px"></div>
<div class="t" style="left:210px;top:163px;font-size:8.5px;color:#1a1a1a;font-weight:normal;transform:scaleX(0.919);transform-origin:0 0;">Einkäufer</div>
<div class="a" style="left:313px;top:160px;width:11px;height:13px;background:#dedede;border-left:1px solid #c8c8c8"></div>
<svg style="left:316px;top:165px" width="6" height="3.5" viewBox="0 0 6 3.5"><path d="M0.3 0.3L3 3L5.7 0.3" fill="none" stroke="#6a6a6a" stroke-width="0.8"/></svg>
<div class="a" style="left:207px;top:179px;width:118px;height:15px;background:#fff;border:1px solid #3c3c3c;box-shadow:inset 0 1px 0 #b4b4b4;border-radius:1px"></div>
<div class="t" style="left:210px;top:183px;font-size:8.5px;color:#1a1a1a;font-weight:normal;transform:scaleX(0.948);transform-origin:0 0;">Geschäftsleitung</div>
<div class="a" style="left:313px;top:180px;width:11px;height:13px;background:#dedede;border-left:1px solid #c8c8c8"></div>
<svg style="left:316px;top:185px" width="6" height="3.5" viewBox="0 0 6 3.5"><path d="M0.3 0.3L3 3L5.7 0.3" fill="none" stroke="#6a6a6a" stroke-width="0.8"/></svg>
<div class="a" style="left:207px;top:200px;width:118px;height:15px;background:#fff;border:1px solid #3c3c3c;box-shadow:inset 0 1px 0 #b4b4b4;border-radius:1px"></div>
<div class="t" style="left:210px;top:203px;font-size:8.5px;color:#1a1a1a;font-weight:normal;transform:scaleX(0.927);transform-origin:0 0;">Sehr geehrter Frau Ellinger</div>
<div class="a" style="left:207px;top:220px;width:65px;height:15px;background:#fff;border:1px solid #3c3c3c;box-shadow:inset 0 1px 0 #b4b4b4;border-radius:1px"></div>
<div class="t" style="left:210px;top:223px;font-size:8.5px;color:#1a1a1a;font-weight:normal;transform:scaleX(0.890);transform-origin:0 0;">0911 200</div>
<div class="a" style="left:272px;top:220.5px;width:13px;height:13.5px;background:#e3e3e3;border:1px solid #d6d6d6;border-radius:1px"></div>
<div class="a" style="left:276px;top:230px;width:1px;height:1px;background:#8a7a9a"></div>
<div class="a" style="left:278px;top:230px;width:1px;height:1px;background:#8a7a9a"></div>
<div class="a" style="left:280px;top:230px;width:1px;height:1px;background:#8a7a9a"></div>
<div class="t" style="left:290px;top:224px;font-size:8.5px;color:#2a2a3a;font-weight:normal;transform:scaleX(0.900);transform-origin:0 0;">x</div>
<div class="a" style="left:296px;top:220px;width:29px;height:15px;background:#fff;border:1px solid #3c3c3c;box-shadow:inset 0 1px 0 #b4b4b4;border-radius:1px"></div>
<div class="a" style="left:207px;top:241px;width:104px;height:15px;background:#fff;border:1px solid #3c3c3c;box-shadow:inset 0 1px 0 #b4b4b4;border-radius:1px"></div>
<div class="t" style="left:210px;top:243px;font-size:8.5px;color:#1a1a1a;font-weight:normal;transform:scaleX(0.903);transform-origin:0 0;">0123 444</div>
<div class="a" style="left:312px;top:241.5px;width:13px;height:13.5px;background:#e3e3e3;border:1px solid #d6d6d6;border-radius:1px"></div>
<div class="a" style="left:316px;top:251px;width:1px;height:1px;background:#8a7a9a"></div>
<div class="a" style="left:318px;top:251px;width:1px;height:1px;background:#8a7a9a"></div>
<div class="a" style="left:320px;top:251px;width:1px;height:1px;background:#8a7a9a"></div>
<div class="a" style="left:207px;top:261px;width:118px;height:15px;background:#fff;border:1px solid #3c3c3c;box-shadow:inset 0 1px 0 #b4b4b4;border-radius:1px"></div>
<div class="t" style="left:210px;top:265px;font-size:8.5px;color:#2b2bd0;font-weight:normal;transform:scaleX(0.973);transform-origin:0 0;"><span class="lk">info@taxiteam.demo</span></div>
<div class="a" style="left:207px;top:282px;width:330px;height:15px;background:#fff;border:1px solid #3c3c3c;box-shadow:inset 0 1px 0 #b4b4b4;border-radius:1px"></div>
<div class="t" style="left:210px;top:286px;font-size:8.5px;color:#1a1a1a;font-weight:normal;transform:scaleX(0.966);transform-origin:0 0;">Zur Live-Präsentation eingeladen</div>
<div class="a" style="left:525px;top:283px;width:11px;height:13px;background:#dedede;border-left:1px solid #c8c8c8"></div>
<svg style="left:528px;top:288px" width="6" height="3.5" viewBox="0 0 6 3.5"><path d="M0.3 0.3L3 3L5.7 0.3" fill="none" stroke="#6a6a6a" stroke-width="0.8"/></svg>
<div class="t" style="left:348px;top:122px;font-size:8.5px;color:#2a2a3a;font-weight:normal;transform:scaleX(0.915);transform-origin:0 0;">Adresse 1</div>
<div class="t" style="left:348px;top:142px;font-size:8.5px;color:#2a2a3a;font-weight:normal;transform:scaleX(0.915);transform-origin:0 0;">Adresse 2</div>
<div class="t" style="left:348px;top:163px;font-size:8.5px;color:#2a2a3a;font-weight:normal;transform:scaleX(0.907);transform-origin:0 0;">Stadt</div>
<div class="t" style="left:348px;top:183px;font-size:8.5px;color:#2a2a3a;font-weight:normal;transform:scaleX(0.907);transform-origin:0 0;">Bundesland/PLZ</div>
<div class="t" style="left:348px;top:203px;font-size:8.5px;color:#2a2a3a;font-weight:normal;transform:scaleX(0.941);transform-origin:0 0;">Post</div>
<div class="t" style="left:348px;top:224px;font-size:8.5px;color:#2a2a3a;font-weight:normal;transform:scaleX(0.846);transform-origin:0 0;">Land</div>
<div class="t" style="left:348px;top:244px;font-size:8.5px;color:#2a2a3a;font-weight:normal;transform:scaleX(0.847);transform-origin:0 0;">Fax</div>
<div class="t" style="left:348px;top:265px;font-size:8.5px;color:#2a2a3a;font-weight:normal;transform:scaleX(0.935);transform-origin:0 0;">Webseite</div>
<div class="a" style="left:419px;top:118px;width:118px;height:15px;background:#fff;border:1px solid #3c3c3c;box-shadow:inset 0 1px 0 #b4b4b4;border-radius:1px"></div>
<div class="t" style="left:422px;top:122px;font-size:8.5px;color:#1a1a1a;font-weight:normal;transform:scaleX(0.950);transform-origin:0 0;">Gewerbegebiet 1a</div>
<div class="a" style="left:419px;top:138px;width:118px;height:15px;background:#fff;border:1px solid #3c3c3c;box-shadow:inset 0 1px 0 #b4b4b4;border-radius:1px"></div>
<div class="a" style="left:419px;top:159px;width:118px;height:15px;background:#fff;border:1px solid #3c3c3c;box-shadow:inset 0 1px 0 #b4b4b4;border-radius:1px"></div>
<div class="t" style="left:422px;top:163px;font-size:8.5px;color:#1a1a1a;font-weight:normal;transform:scaleX(0.935);transform-origin:0 0;">Düsseldorf</div>
<div class="a" style="left:525px;top:160px;width:11px;height:13px;background:#dedede;border-left:1px solid #c8c8c8"></div>
<svg style="left:528px;top:165px" width="6" height="3.5" viewBox="0 0 6 3.5"><path d="M0.3 0.3L3 3L5.7 0.3" fill="none" stroke="#6a6a6a" stroke-width="0.8"/></svg>
<div class="a" style="left:419px;top:179px;width:118px;height:15px;background:#fff;border:1px solid #3c3c3c;box-shadow:inset 0 1px 0 #b4b4b4;border-radius:1px"></div>
<div class="a" style="left:525px;top:180px;width:11px;height:13px;background:#dedede;border-left:1px solid #c8c8c8"></div>
<svg style="left:528px;top:185px" width="6" height="3.5" viewBox="0 0 6 3.5"><path d="M0.3 0.3L3 3L5.7 0.3" fill="none" stroke="#6a6a6a" stroke-width="0.8"/></svg>
<div class="a" style="left:420px;top:180px;width:104px;height:13px;overflow:hidden"><div class="t" style="left:2px;top:3px;font-size:8.5px;color:#1a1a1a;transform:scaleX(0.9);transform-origin:0 0">Nordrhein-Westfalen, Deutschland</div></div>
<div class="a" style="left:419px;top:200px;width:118px;height:15px;background:#fff;border:1px solid #3c3c3c;box-shadow:inset 0 1px 0 #b4b4b4;border-radius:1px"></div>
<div class="t" style="left:422px;top:203px;font-size:8.5px;color:#1a1a1a;font-weight:normal;transform:scaleX(0.931);transform-origin:0 0;">40123</div>
<div class="a" style="left:419px;top:220px;width:118px;height:15px;background:#fff;border:1px solid #3c3c3c;box-shadow:inset 0 1px 0 #b4b4b4;border-radius:1px"></div>
<div class="t" style="left:422px;top:224px;font-size:8.5px;color:#1a1a1a;font-weight:normal;transform:scaleX(0.931);transform-origin:0 0;">Deutschland</div>
<div class="a" style="left:525px;top:221px;width:11px;height:13px;background:#dedede;border-left:1px solid #c8c8c8"></div>
<svg style="left:528px;top:226px" width="6" height="3.5" viewBox="0 0 6 3.5"><path d="M0.3 0.3L3 3L5.7 0.3" fill="none" stroke="#6a6a6a" stroke-width="0.8"/></svg>
<div class="a" style="left:419px;top:241px;width:104px;height:15px;background:#fff;border:1px solid #3c3c3c;box-shadow:inset 0 1px 0 #b4b4b4;border-radius:1px"></div>
<div class="t" style="left:422px;top:243px;font-size:8.5px;color:#1a1a1a;font-weight:normal;transform:scaleX(0.901);transform-origin:0 0;">0911 200 99</div>
<div class="a" style="left:524px;top:241.5px;width:13px;height:13.5px;background:#e3e3e3;border:1px solid #d6d6d6;border-radius:1px"></div>
<div class="a" style="left:528px;top:251px;width:1px;height:1px;background:#8a7a9a"></div>
<div class="a" style="left:530px;top:251px;width:1px;height:1px;background:#8a7a9a"></div>
<div class="a" style="left:532px;top:251px;width:1px;height:1px;background:#8a7a9a"></div>
<div class="a" style="left:419px;top:261px;width:118px;height:15px;background:#fff;border:1px solid #3c3c3c;box-shadow:inset 0 1px 0 #b4b4b4;border-radius:1px"></div>
<div class="t" style="left:422px;top:265px;font-size:8.5px;color:#2b2bd0;font-weight:normal;transform:scaleX(1.040);transform-origin:0 0;"><span class="lk">www.robots.ag</span></div>
<div class="t" style="left:560px;top:122px;font-size:8.5px;color:#2a2a3a;font-weight:normal;transform:scaleX(0.944);transform-origin:0 0;">ID/Status</div>
<div class="t" style="left:560px;top:142px;font-size:8.5px;color:#2a2a3a;font-weight:normal;transform:scaleX(0.952);transform-origin:0 0;">Empfohlen von</div>
<div class="a" style="left:626px;top:118px;width:106px;height:15px;background:#fff;border:1px solid #3c3c3c;box-shadow:inset 0 1px 0 #b4b4b4;border-radius:1px"></div>
<div class="t" style="left:629px;top:122px;font-size:8.5px;color:#1a1a1a;font-weight:normal;transform:scaleX(0.934);transform-origin:0 0;">Entscheider;Key Kunde</div>
<div class="a" style="left:720px;top:119px;width:11px;height:13px;background:#dedede;border-left:1px solid #c8c8c8"></div>
<svg style="left:723px;top:124px" width="6" height="3.5" viewBox="0 0 6 3.5"><path d="M0.3 0.3L3 3L5.7 0.3" fill="none" stroke="#6a6a6a" stroke-width="0.8"/></svg>
<div class="a" style="left:626px;top:138px;width:106px;height:15px;background:#fff;border:1px solid #3c3c3c;box-shadow:inset 0 1px 0 #b4b4b4;border-radius:1px"></div>
<div class="t" style="left:629px;top:142px;font-size:8.5px;color:#1a1a1a;font-weight:normal;transform:scaleX(0.948);transform-origin:0 0;">Empfehlung</div>
<div class="a" style="left:720px;top:139px;width:11px;height:13px;background:#dedede;border-left:1px solid #c8c8c8"></div>
<svg style="left:723px;top:144px" width="6" height="3.5" viewBox="0 0 6 3.5"><path d="M0.3 0.3L3 3L5.7 0.3" fill="none" stroke="#6a6a6a" stroke-width="0.8"/></svg>
<div class="t" style="left:560px;top:203px;font-size:8.5px;color:#2a2a3a;font-weight:normal;transform:scaleX(0.913);transform-origin:0 0;">E-mail</div>
<div class="a" style="left:626px;top:200px;width:106px;height:15px;background:#efefef;border:1px solid #7a7a7a;box-shadow:inset 0 1px 0 #c8c8c8;border-radius:1px"></div>
<div class="a" style="left:720px;top:201px;width:11px;height:13px;background:#dedede;border-left:1px solid #c8c8c8"></div>
<svg style="left:723px;top:206px" width="6" height="3.5" viewBox="0 0 6 3.5"><path d="M0.3 0.3L3 3L5.7 0.3" fill="none" stroke="#6a6a6a" stroke-width="0.8"/></svg>
<div class="t" style="left:560px;top:224px;font-size:8.5px;color:#2a2a3a;font-weight:normal;transform:scaleX(0.899);transform-origin:0 0;">Anrufversuch</div>
<div class="a" style="left:626px;top:220px;width:106px;height:15px;background:#efefef;border:1px solid #7a7a7a;box-shadow:inset 0 1px 0 #c8c8c8;border-radius:1px"></div>
<div class="a" style="left:720px;top:221px;width:11px;height:13px;background:#dedede;border-left:1px solid #c8c8c8"></div>
<svg style="left:723px;top:226px" width="6" height="3.5" viewBox="0 0 6 3.5"><path d="M0.3 0.3L3 3L5.7 0.3" fill="none" stroke="#6a6a6a" stroke-width="0.8"/></svg>
<div class="t" style="left:560px;top:244px;font-size:8.5px;color:#2a2a3a;font-weight:normal;transform:scaleX(0.890);transform-origin:0 0;">Call Reach</div>
<div class="a" style="left:626px;top:241px;width:106px;height:15px;background:#efefef;border:1px solid #7a7a7a;box-shadow:inset 0 1px 0 #c8c8c8;border-radius:1px"></div>
<div class="t" style="left:629px;top:244px;font-size:8.5px;color:#1a1a1a;font-weight:normal;transform:scaleX(0.987);transform-origin:0 0;">01/02/2018</div>
<div class="a" style="left:720px;top:242px;width:11px;height:13px;background:#dedede;border-left:1px solid #c8c8c8"></div>
<svg style="left:723px;top:247px" width="6" height="3.5" viewBox="0 0 6 3.5"><path d="M0.3 0.3L3 3L5.7 0.3" fill="none" stroke="#6a6a6a" stroke-width="0.8"/></svg>
<div class="t" style="left:560px;top:265px;font-size:8.5px;color:#2a2a3a;font-weight:normal;transform:scaleX(0.918);transform-origin:0 0;">Besprechung</div>
<div class="a" style="left:626px;top:261px;width:106px;height:15px;background:#efefef;border:1px solid #7a7a7a;box-shadow:inset 0 1px 0 #c8c8c8;border-radius:1px"></div>
<div class="t" style="left:629px;top:265px;font-size:8.5px;color:#1a1a1a;font-weight:normal;transform:scaleX(0.987);transform-origin:0 0;">20/02/2018</div>
<div class="a" style="left:720px;top:262px;width:11px;height:13px;background:#dedede;border-left:1px solid #c8c8c8"></div>
<svg style="left:723px;top:267px" width="6" height="3.5" viewBox="0 0 6 3.5"><path d="M0.3 0.3L3 3L5.7 0.3" fill="none" stroke="#6a6a6a" stroke-width="0.8"/></svg>
<div class="t" style="left:560px;top:286px;font-size:8.5px;color:#2a2a3a;font-weight:normal;transform:scaleX(0.941);transform-origin:0 0;">Brief geschickt</div>
<div class="a" style="left:626px;top:282px;width:106px;height:15px;background:#efefef;border:1px solid #7a7a7a;box-shadow:inset 0 1px 0 #c8c8c8;border-radius:1px"></div>
<div class="a" style="left:720px;top:283px;width:11px;height:13px;background:#dedede;border-left:1px solid #c8c8c8"></div>
<svg style="left:723px;top:288px" width="6" height="3.5" viewBox="0 0 6 3.5"><path d="M0.3 0.3L3 3L5.7 0.3" fill="none" stroke="#6a6a6a" stroke-width="0.8"/></svg>
<div class="a" style="left:131px;top:308px;width:893px;height:4px;background:linear-gradient(#e8e8e8,#c6c6c6 65%,#d6d6d6)"></div>
<div class="a" style="left:131px;top:312px;width:893px;height:250px;background:#f0f0f0"></div>
<div class="a" style="left:132px;top:313px;width:41px;height:12px;background:#e9e9e9"></div>
<div class="t" style="left:136px;top:316px;font-size:8.2px;color:#2a2a3a;font-weight:normal;transform:scaleX(0.848);transform-origin:0 0;">Tätigkeiten</div>
<div class="a" style="left:174px;top:313px;width:59px;height:12px;background:#e9e9e9"></div>
<div class="t" style="left:177.5px;top:316px;font-size:8.2px;color:#2a2a3a;font-weight:normal;transform:scaleX(0.835);transform-origin:0 0;">Verkaufschancen</div>
<div class="a" style="left:234px;top:312px;width:35px;height:14px;background:#fcfcfc"></div>
<div class="t" style="left:237.5px;top:315px;font-size:8.2px;color:#1a1a2a;font-weight:normal;transform:scaleX(0.850);transform-origin:0 0;">Historien</div>
<div class="a" style="left:269px;top:313px;width:29px;height:12px;background:#e9e9e9"></div>
<div class="t" style="left:272px;top:316px;font-size:8.2px;color:#2a2a3a;font-weight:normal;transform:scaleX(0.827);transform-origin:0 0;">Notizen</div>
<div class="a" style="left:299px;top:313px;width:41px;height:12px;background:#e9e9e9"></div>
<div class="t" style="left:302.5px;top:316px;font-size:8.2px;color:#2a2a3a;font-weight:normal;transform:scaleX(0.835);transform-origin:0 0;">Dokumente</div>
<div class="a" style="left:341px;top:313px;width:56px;height:12px;background:#e9e9e9"></div>
<div class="t" style="left:345px;top:316px;font-size:8.2px;color:#2a2a3a;font-weight:normal;transform:scaleX(0.821);transform-origin:0 0;">Gruppen/Firmen</div>
<div class="a" style="left:398px;top:313px;width:69px;height:12px;background:#e9e9e9"></div>
<div class="t" style="left:402px;top:316px;font-size:8.2px;color:#2a2a3a;font-weight:normal;transform:scaleX(0.834);transform-origin:0 0;">Sekundäre Kontakte</div>
<div class="a" style="left:468px;top:313px;width:46px;height:12px;background:#e9e9e9"></div>
<div class="t" style="left:472px;top:316px;font-size:8.2px;color:#2a2a3a;font-weight:normal;transform:scaleX(0.815);transform-origin:0 0;">Beziehungen</div>
<div class="a" style="left:515px;top:313px;width:72px;height:12px;background:#e9e9e9"></div>
<div class="t" style="left:519px;top:316px;font-size:8.2px;color:#2a2a3a;font-weight:normal;transform:scaleX(0.810);transform-origin:0 0;">Social Media-Updates</div>
<div class="a" style="left:588px;top:313px;width:36px;height:12px;background:#e9e9e9"></div>
<div class="t" style="left:592px;top:316px;font-size:8.2px;color:#2a2a3a;font-weight:normal;transform:scaleX(0.876);transform-origin:0 0;">Web-Info</div>
<div class="a" style="left:625px;top:313px;width:48px;height:12px;background:#e9e9e9"></div>
<div class="t" style="left:629px;top:316px;font-size:8.2px;color:#2a2a3a;font-weight:normal;transform:scaleX(0.849);transform-origin:0 0;">Personal Info</div>
<div class="a" style="left:674px;top:313px;width:109px;height:12px;background:#e9e9e9"></div>
<div class="t" style="left:677.5px;top:316px;font-size:8.2px;color:#2a2a3a;font-weight:normal;transform:scaleX(0.859);transform-origin:0 0;">Zugriffsberechtigungen (Kontakt)</div>
<div class="a" style="left:784px;top:313px;width:52px;height:12px;background:#e9e9e9"></div>
<div class="t" style="left:788px;top:316px;font-size:8.2px;color:#2a2a3a;font-weight:normal;transform:scaleX(0.834);transform-origin:0 0;">Benutzerfelder</div>
<div class="a" style="left:837px;top:313px;width:33px;height:12px;background:#e9e9e9"></div>
<div class="t" style="left:841px;top:316px;font-size:8.2px;color:#2a2a3a;font-weight:normal;transform:scaleX(0.823);transform-origin:0 0;">Zeitleiste</div>
<div class="a" style="left:132px;top:325px;width:888px;height:17px;background:#f3f3f3"></div>
<div class="t" style="left:136px;top:329px;font-size:8.5px;color:#2a2a3a;font-weight:normal;transform:scaleX(0.876);transform-origin:0 0;">Datum:</div>
<div class="a" style="left:164px;top:326px;width:98px;height:14px;background:#fff;border-top:2px solid #7a7a7a;border-left:2px solid #7a7a7a;border-right:1px solid #e0e0e0;border-bottom:1px solid #e0e0e0"></div>
<div class="t" style="left:166px;top:329px;font-size:8.5px;color:#1a1a1a;font-weight:normal;transform:scaleX(0.867);transform-origin:0 0;">Alle Daten</div>
<div class="a" style="left:251px;top:328px;width:10px;height:11px;background:#e6e6e6;border-right:1px solid #777;border-bottom:1px solid #777"></div>
<svg style="left:253.5px;top:332.5px" width="5" height="3" viewBox="0 0 5 3"><path d="M0 0H5L2.5 3Z" fill="#111"/></svg>
<div class="t" style="left:266.5px;top:329px;font-size:8.5px;color:#2a2a3a;font-weight:normal;transform:scaleX(0.862);transform-origin:0 0;">Typen:</div>
<div class="a" style="left:291px;top:326px;width:100px;height:14px;background:#fff;border:1px solid #7aa7d0"></div>
<div class="t" style="left:296px;top:329px;font-size:8.5px;color:#1a1a1a;font-weight:normal;transform:scaleX(0.917);transform-origin:0 0;">Alle</div>
<div class="a" style="left:379px;top:327px;width:11px;height:12px;background:#e0e0e0;border-left:1px solid #c8c8c8"></div>
<svg style="left:382px;top:331.5px" width="6" height="3.5" viewBox="0 0 6 3.5"><path d="M0.3 0.3L3 3L5.7 0.3" fill="none" stroke="#666" stroke-width="0.8"/></svg>
<div class="t" style="left:393px;top:329px;font-size:8.5px;color:#2a2a3a;font-weight:normal;transform:scaleX(0.867);transform-origin:0 0;">Schlüsselwort:</div>
<div class="a" style="left:444px;top:326px;width:99px;height:14px;background:#fff;border-top:1px solid #9a9a9a;border-left:1px solid #9a9a9a;border-right:1px solid #e6e6e6;border-bottom:1px solid #e6e6e6"></div>
<div class="t" style="left:547px;top:329px;font-size:8.5px;color:#2a2a3a;font-weight:normal;transform:scaleX(0.838);transform-origin:0 0;">Go</div>
<svg style="left:562px;top:328px" width="10" height="9" viewBox="0 0 10 9"><circle cx="4" cy="2.2" r="2.2" fill="#1e6aa8"/><path d="M0 9Q0 5 3 4.8H5Q8 5 8 9Z" fill="#1e6aa8"/><circle cx="8.5" cy="2" r="1.3" fill="#f0a030"/></svg>
<div class="t" style="left:575px;top:329px;font-size:8.5px;color:#2a2a3a;font-weight:normal;transform:scaleX(0.863);transform-origin:0 0;">Benutzer auswählen</div>
<svg style="left:647px;top:328px" width="10" height="10" viewBox="0 0 10 10"><circle cx="5" cy="5" r="4.5" fill="none" stroke="#3a96dc" stroke-width="0.9"/><circle cx="5" cy="5" r="2.6" fill="none" stroke="#3a96dc" stroke-width="0.9"/></svg>
<svg style="left:661px;top:328px" width="11" height="10" viewBox="0 0 11 10"><path d="M2 9L8.5 2.5Q10 1 8.8 0.8Q7.5 0.3 6.5 1.5L1 7Q-0.2 8.8 1.5 9.6Q3 10.2 4 9L9 4" fill="none" stroke="#3a96dc" stroke-width="1.3"/></svg>
<svg style="left:676px;top:328px" width="11" height="10" viewBox="0 0 11 10"><path d="M0.5 3.5V9.5H8V7" fill="none" stroke="#7aaac8" stroke-width="0.9"/><path d="M3 7Q3.5 3 8 3V1L11 4L8 7V5Q5 5 3 7Z" fill="#1e6aa8"/></svg>
<div class="t" style="left:978px;top:329px;font-size:8.5px;color:#2a2a3a;font-weight:normal;transform:scaleX(0.913);transform-origin:0 0;">Optionen</div>
<svg style="left:1013px;top:332px" width="5" height="3" viewBox="0 0 5 3"><path d="M0 0H5L2.5 3Z" fill="#222"/></svg>
<div class="a" style="left:134px;top:343px;width:589px;height:216px;background:#fff;border-top:1px solid #6e6e6e;border-left:1px solid #a8a8a8;border-bottom:1px solid #b8b8b8"></div>
<div class="a" style="left:135px;top:344px;width:587px;height:11px;background:#e3e3e3;border-bottom:1px solid #b8b8b8"></div>
<div class="a" style="left:184px;top:344px;width:1px;height:11px;background:#c4c4c4"></div>
<div class="a" style="left:225px;top:344px;width:1px;height:11px;background:#c4c4c4"></div>
<div class="a" style="left:289px;top:344px;width:1px;height:11px;background:#c4c4c4"></div>
<div class="a" style="left:722px;top:343px;width:4px;height:215px;background:#dcdcdc"></div>
<div class="a" style="left:722px;top:343px;width:1px;height:215px;background:#a0a0a0"></div>
<div class="t" style="left:137px;top:346px;font-size:8px;color:#222;font-weight:normal;transform:scaleX(0.934);transform-origin:0 0;">Datum</div>
<div class="t" style="left:186.5px;top:346px;font-size:8px;color:#222;font-weight:normal;transform:scaleX(1.050);transform-origin:0 0;">Zeit</div>
<div class="t" style="left:228px;top:346px;font-size:8px;color:#222;font-weight:normal;transform:scaleX(0.887);transform-origin:0 0;">Ergebnis</div>
<div class="t" style="left:292px;top:346px;font-size:8px;color:#222;font-weight:normal;transform:scaleX(0.937);transform-origin:0 0;">Betreff &amp; Details</div>
<div class="t" style="left:137px;top:357px;font-size:8px;color:#222;font-weight:normal;transform:scaleX(0.849);transform-origin:0 0;">20/02/2018</div>
<div class="t" style="left:186.5px;top:357px;font-size:8px;color:#222;font-weight:normal;transform:scaleX(0.849);transform-origin:0 0;">14:00</div>
<div class="t" style="left:228px;top:357px;font-size:8px;color:#3a2a40;font-weight:normal;transform:scaleX(0.827);transform-origin:0 0;">Besprechung</div>
<div class="t" style="left:228px;top:364px;font-size:8px;color:#3a2a40;font-weight:normal;transform:scaleX(0.833);transform-origin:0 0;">abgehalten</div>
<div class="t" style="left:290px;top:357px;font-size:8px;color:#222;font-weight:normal;transform:scaleX(0.838);transform-origin:0 0;">Produktpräsentation</div>
<div class="t" style="left:293.5px;top:365px;font-size:8px;color:#222;font-weight:normal;transform:scaleX(0.851);transform-origin:0 0;">Sie war begeistert von unserem Produkt X. Bestellung kommt noch diese Woche.</div>
<div class="t" style="left:290px;top:382px;font-size:8px;color:#222;font-weight:normal;transform:scaleX(0.848);transform-origin:0 0;">Im Laufe des Jahres kommen dann weitere Bestellungen.</div>
<div class="t" style="left:137px;top:394px;font-size:8px;color:#222;font-weight:normal;transform:scaleX(0.849);transform-origin:0 0;">05/02/2018</div>
<div class="t" style="left:186.5px;top:394px;font-size:8px;color:#222;font-weight:normal;transform:scaleX(0.849);transform-origin:0 0;">10:00</div>
<div class="t" style="left:228px;top:394px;font-size:8px;color:#3a2a40;font-weight:normal;transform:scaleX(0.863);transform-origin:0 0;">Erledigung</div>
<div class="t" style="left:228px;top:401px;font-size:8px;color:#3a2a40;font-weight:normal;transform:scaleX(0.881);transform-origin:0 0;">abgeschlossen</div>
<div class="t" style="left:290px;top:394px;font-size:8px;color:#222;font-weight:normal;transform:scaleX(0.839);transform-origin:0 0;">Angebot abgeben</div>
<div class="t" style="left:137px;top:413px;font-size:8px;color:#222;font-weight:normal;transform:scaleX(0.849);transform-origin:0 0;">01/02/2018</div>
<div class="t" style="left:186.5px;top:413px;font-size:8px;color:#222;font-weight:normal;transform:scaleX(0.849);transform-origin:0 0;">10:00</div>
<div class="t" style="left:228px;top:413px;font-size:8px;color:#3a2a40;font-weight:normal;transform:scaleX(0.889);transform-origin:0 0;">Anruf</div>
<div class="t" style="left:228px;top:420px;font-size:8px;color:#3a2a40;font-weight:normal;transform:scaleX(0.881);transform-origin:0 0;">abgeschlossen</div>
<div class="t" style="left:290px;top:413px;font-size:8px;color:#222;font-weight:normal;transform:scaleX(0.829);transform-origin:0 0;">Bedarfsermittlung</div>
<div class="t" style="left:293.5px;top:422px;font-size:8px;color:#222;font-weight:normal;transform:scaleX(0.887);transform-origin:0 0;">Sie braucht Produkt X</div>
<div class="t" style="left:290px;top:430px;font-size:8px;color:#222;font-weight:normal;transform:scaleX(0.784);transform-origin:0 0;">Menge Y</div>
<div class="t" style="left:290px;top:447px;font-size:8px;color:#222;font-weight:normal;transform:scaleX(0.848);transform-origin:0 0;">Budget ist vorhanden.</div>
<div class="a" style="left:135px;top:456px;width:587px;height:1px;background:#7a7a7a"></div>
<div class="a" style="left:135px;top:548px;width:587px;height:10px;background:#f0f0f0"></div>
<div class="a" style="left:145px;top:548px;width:469px;height:10px;background:#c9c9c9"></div>
<svg style="left:138.5px;top:550.5px" width="4" height="6" viewBox="0 0 4 6"><path d="M3.5 0.5L0.8 3L3.5 5.5" fill="none" stroke="#555" stroke-width="0.9"/></svg>
<svg style="left:715px;top:550.5px" width="4" height="6" viewBox="0 0 4 6"><path d="M0.5 0.5L3.2 3L0.5 5.5" fill="none" stroke="#555" stroke-width="0.9"/></svg>
<div class="a" style="left:726px;top:343px;width:294px;height:216px;background:#f0f0f0;border-top:1px solid #6e6e6e;border-left:1px solid #6e6e6e"></div>
<div class="a" style="left:1019px;top:343px;width:1px;height:216px;background:#e0e0e0"></div>
<div class="a" style="left:726px;top:558px;width:294px;height:1px;background:#e6e6e6"></div>
<div class="a" style="left:131px;top:559px;width:893px;height:4px;background:#f0f0f0"></div>
<div class="a" style="left:0px;top:563px;width:1024px;height:13px;background:#f0f0f0;border-top:1px solid #e2e2e2"></div>
<div class="t" style="left:1px;top:567px;font-size:8px;color:#1a1a1a;font-weight:normal;transform:scaleX(0.865);transform-origin:0 0;">Suche Kontakt</div>
<div class="a" style="left:127px;top:563px;width:1px;height:13px;background:#d8d8d8"></div>
<div class="t" style="left:130px;top:567px;font-size:8px;color:#1a1a1a;font-weight:normal;transform:scaleX(0.972);transform-origin:0 0;">Historie: 3</div>
<div class="a" style="left:907px;top:563px;width:1px;height:13px;background:#d8d8d8"></div>
<div class="t" style="left:909.5px;top:567px;font-size:8px;color:#1a1a1a;font-weight:normal;transform:scaleX(0.866);transform-origin:0 0;">Klaus Tester</div>
<div class="a" style="left:996px;top:563px;width:1px;height:13px;background:#d8d8d8"></div>
<div class="a" style="left:1012px;top:563px;width:1px;height:13px;background:#d8d8d8"></div>
<div class="a" style="left:1020px;top:573px;width:1px;height:1px;background:#aaa"></div>
<div class="a" style="left:1018px;top:573px;width:1px;height:1px;background:#aaa"></div>
<div class="a" style="left:1020px;top:571px;width:1px;height:1px;background:#aaa"></div>
<div class="a" style="left:1016px;top:573px;width:1px;height:1px;background:#aaa"></div>
<div class="a" style="left:1018px;top:571px;width:1px;height:1px;background:#aaa"></div>
<div class="a" style="left:1020px;top:569px;width:1px;height:1px;background:#aaa"></div>
</body></html>
